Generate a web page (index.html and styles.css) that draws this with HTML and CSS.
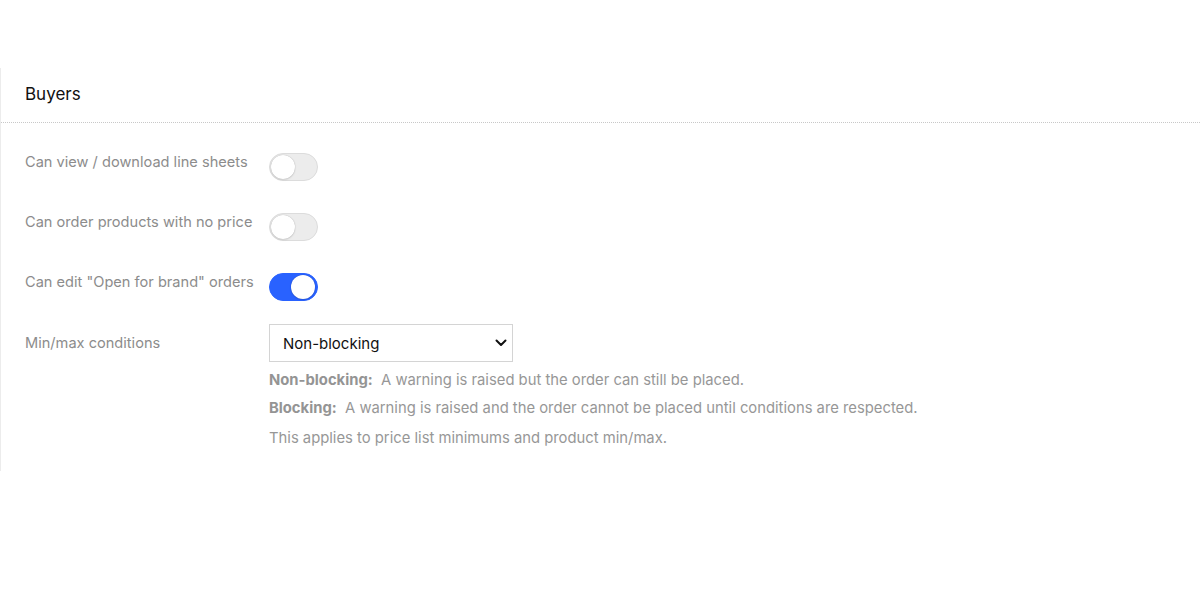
FILE: index.html
```html
<!DOCTYPE html>
<html>
<head>
<meta charset="utf-8">
<link rel="stylesheet" href="styles.css">
</head>
<body>
<section class="panel">
  <header class="panel-head">Buyers</header>
  <div class="panel-body">
    <div class="row">
      <div class="label">Can view / download line sheets</div>
      <div class="control"><span class="toggle"><span class="knob"></span></span></div>
    </div>
    <div class="row">
      <div class="label">Can order products with no price</div>
      <div class="control"><span class="toggle"><span class="knob"></span></span></div>
    </div>
    <div class="row">
      <div class="label">Can edit "Open for brand" orders</div>
      <div class="control"><span class="toggle on"><span class="knob"></span></span></div>
    </div>
    <div class="row row-select">
      <div class="label">Min/max conditions</div>
      <div class="control">
        <div class="select">
          <span>Non-blocking</span>
          <svg class="chev" width="12" height="8" viewBox="0 0 12 8"><path d="M1.5 1.5 L6 6 L10.5 1.5" fill="none" stroke="#111" stroke-width="2" stroke-linecap="round" stroke-linejoin="round"/></svg>
        </div>
        <div class="help">
          <p><b>Non-blocking:</b>&nbsp; A warning is raised but the order can still be placed.</p>
          <p><b>Blocking:</b>&nbsp; A warning is raised and the order cannot be placed until conditions are respected.</p>
          <p>This applies to price list minimums and product min/max.</p>
        </div>
      </div>
    </div>
  </div>
</section>
</body>
</html>
```

FILE: styles.css
```css
* { box-sizing: border-box; }
html, body { margin: 0; padding: 0; background: #fff; }
body {
  font-family: Inter, "Liberation Sans", Arial, sans-serif;
  padding-top: 68px;
}
.panel {
  border-left: 1px solid #ececec;
  height: 403px;
}
.panel-head {
  height: 55px;
  padding: 16px 24px 0;
  font-size: 17px;
  color: #111;
  border-bottom: 1px dotted #c8c8c8;
}
.panel-body {
  padding: 30px 24px 0;
  display: flex;
  flex-direction: column;
  gap: 32px;
}
.row {
  display: flex;
  align-items: flex-start;
  height: 28px;
}
.row-select { height: auto; margin-top: -9px; }
.label {
  width: 244px;
  font-size: 14.6px;
  line-height: 18px;
  color: #8c8c8c;
}
.row-select .label { padding-top: 10px; }
.toggle {
  display: block;
  width: 49px;
  height: 28px;
  border-radius: 14px;
  background: #ececec;
  border: 1px solid #dcdcdc;
  position: relative;
}
.toggle .knob {
  position: absolute;
  left: 1px; top: 1px;
  width: 24px; height: 24px;
  border-radius: 50%;
  background: #fff;
  box-shadow: 0 0 1px rgba(0,0,0,0.3), 0 1px 2px rgba(0,0,0,0.1);
}
.toggle.on { background: #2962ff; border-color: #2962ff; }
.toggle.on .knob { left: 21px; }
.select {
  width: 244px;
  height: 38px;
  border: 1px solid #d4d4d4;
  display: flex;
  align-items: center;
  justify-content: space-between;
  padding: 0 5px 0 13px;
  font-size: 15px;
  color: #111;
}
.help { padding-top: 4px; }
.help p {
  margin: 0;
  font-size: 14.8px;
  line-height: 28px;
  color: #979797;
}
.help p:last-child { margin-top: 2px; }
.help b { font-weight: 700; color: #949494; }
```
